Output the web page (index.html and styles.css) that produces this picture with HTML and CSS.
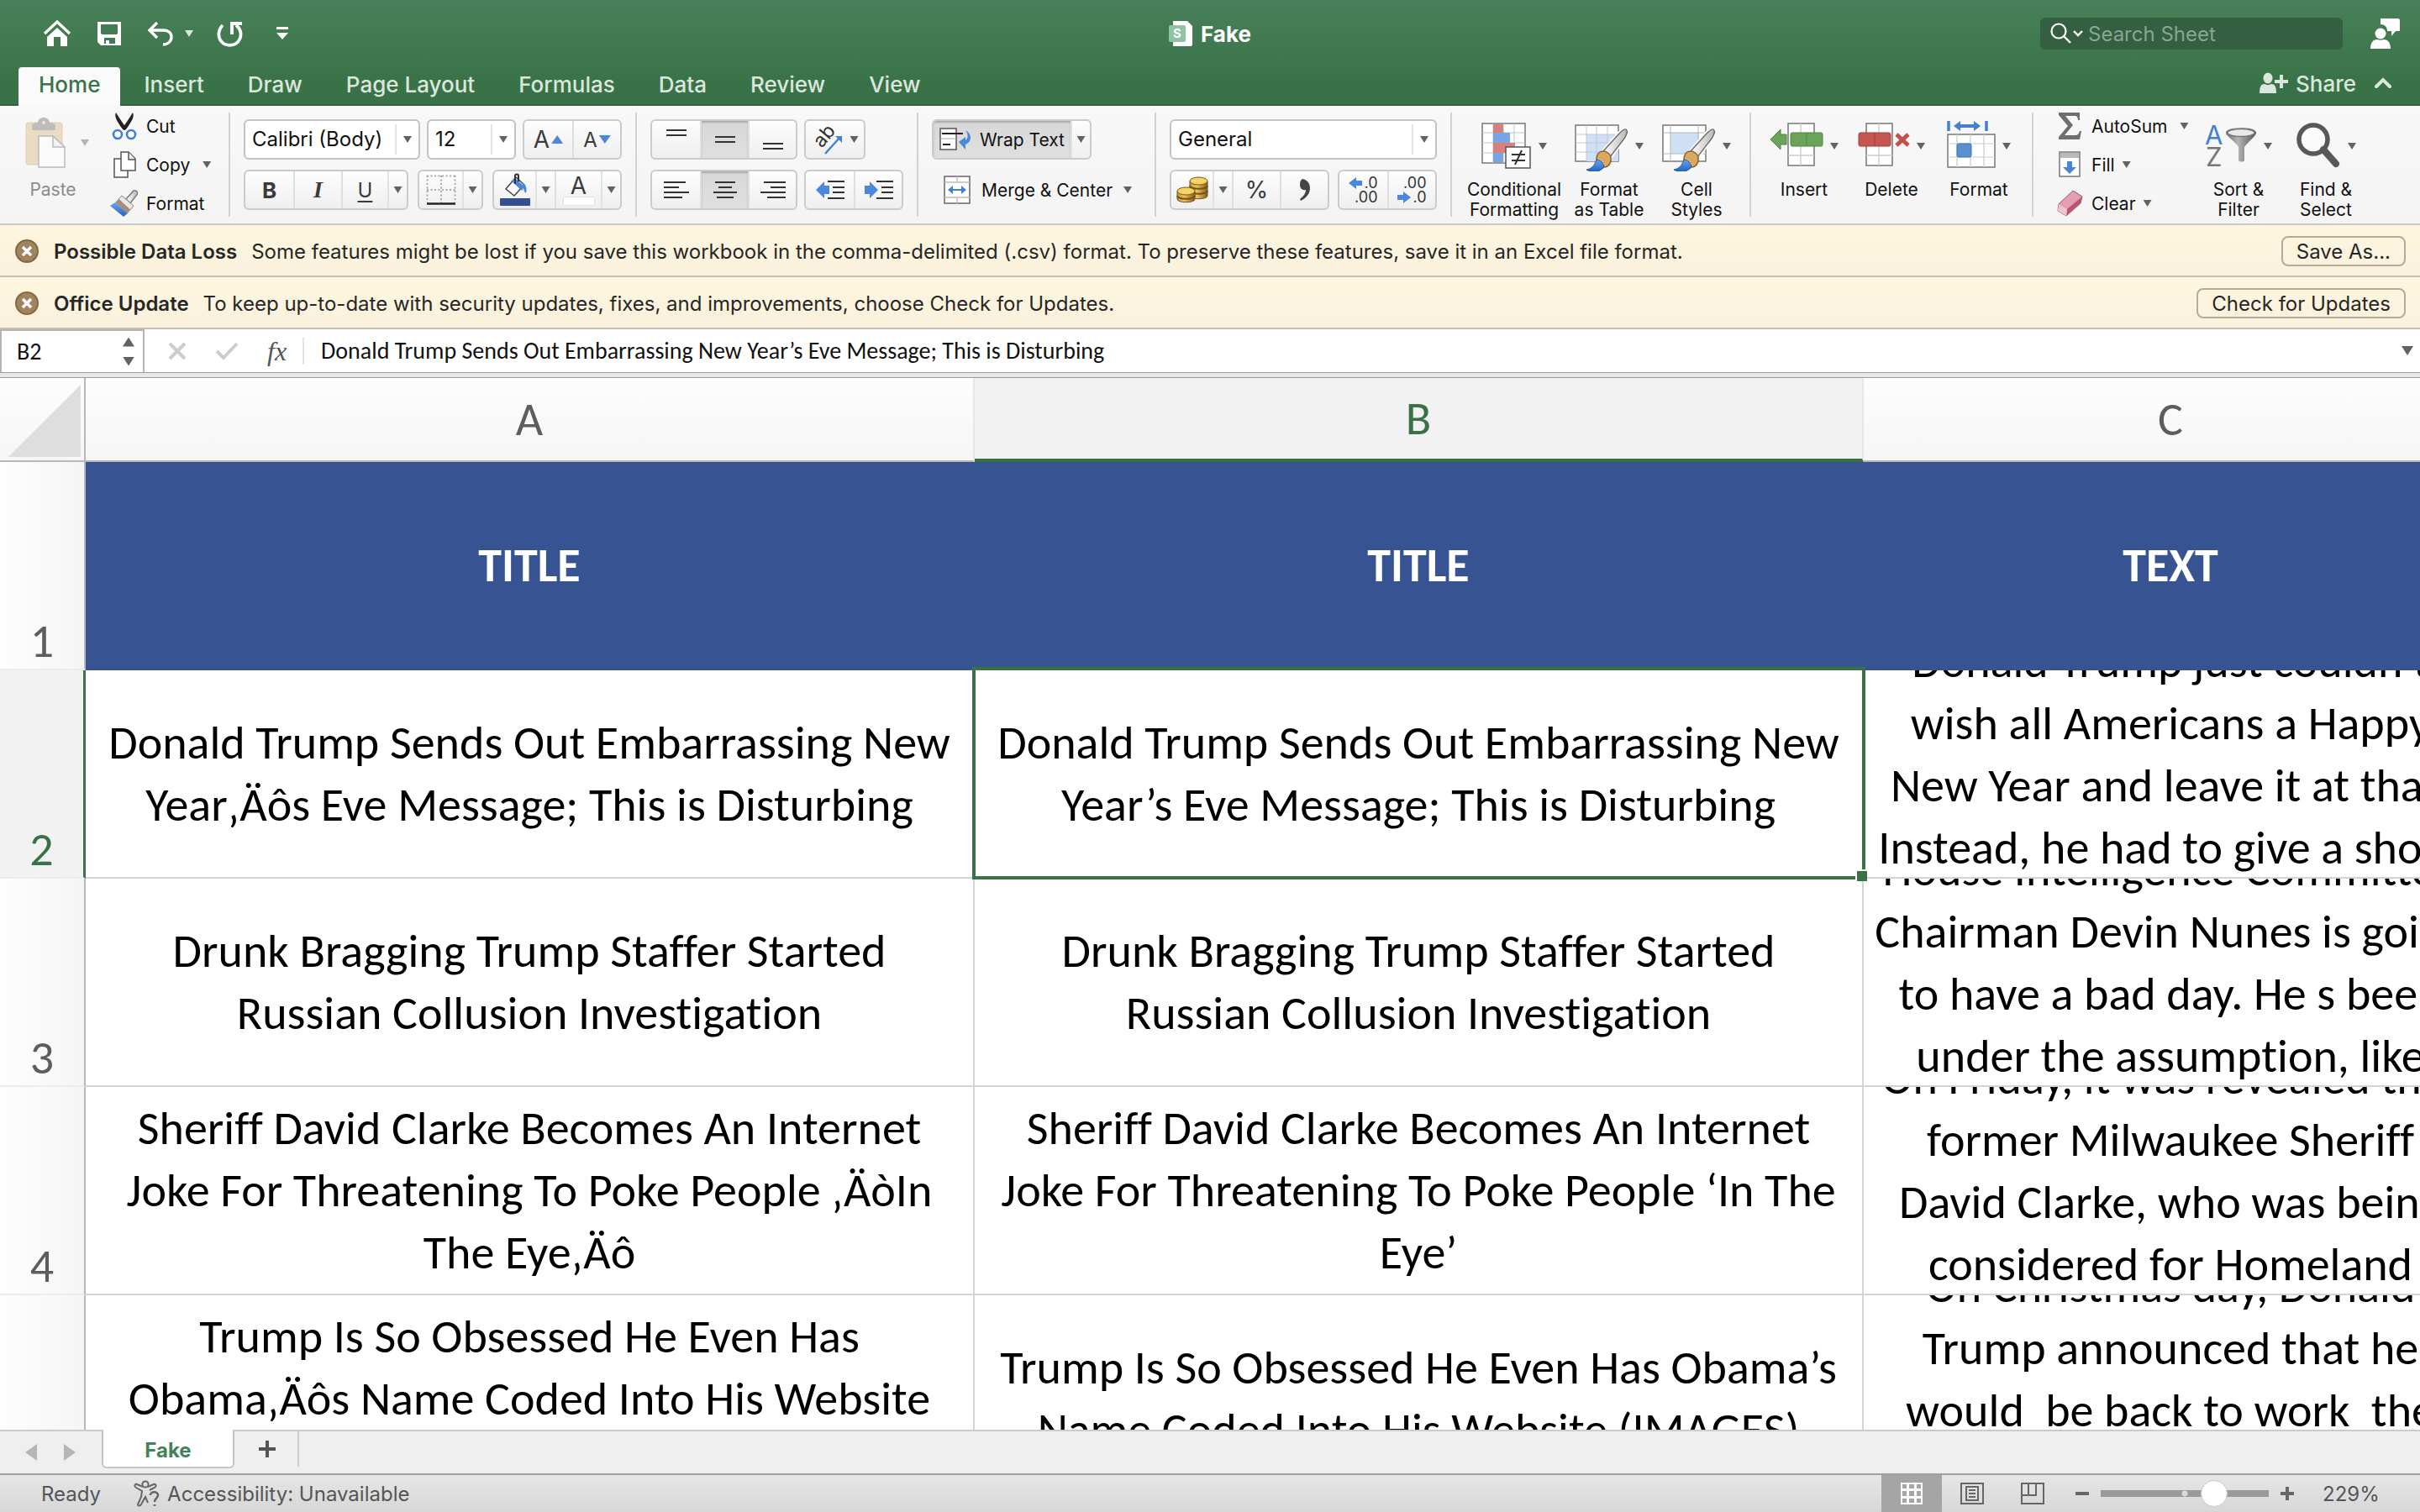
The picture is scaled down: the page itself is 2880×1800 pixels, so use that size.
FILE: index.html
```html
<!DOCTYPE html>
<html lang="en">
<head>
<meta charset="utf-8">
<title>Fake</title>
<link rel="stylesheet" href="styles.css">
</head>
<body>
<svg class="defs" aria-hidden="true">
  <defs>
    <linearGradient id="gold" x1="0" x2="1"><stop offset="0" stop-color="#c89a35"/><stop offset=".4" stop-color="#e9c45c"/><stop offset="1" stop-color="#8a5a1c"/></linearGradient>
    <linearGradient id="blade" x1="0" x2="1"><stop offset="0" stop-color="#ffffff"/><stop offset="1" stop-color="#b9b9b9"/></linearGradient>
    <linearGradient id="steel" x1="0" x2="1"><stop offset="0" stop-color="#6b6b6b"/><stop offset=".4" stop-color="#b5b5b5"/><stop offset="1" stop-color="#555"/></linearGradient>
    <linearGradient id="paint" x1="0" y1="0" x2="0" y2="1"><stop offset="0" stop-color="#6aa5ee"/><stop offset="1" stop-color="#2161c4"/></linearGradient>
    <symbol id="brush" viewBox="0 0 52 52">
      <path d="M49 1c3 2 1 6-2 11L30 34l-8-7L41 6c3-3 6-6 8-5z" fill="url(#blade)" stroke="#fff" stroke-width="5"/>
      <path d="M49 1c3 2 1 6-2 11L30 34l-8-7L41 6c3-3 6-6 8-5z" fill="url(#blade)" stroke="#6e6e6e" stroke-width="1.5"/>
      <path d="M22 27c-5 0-8 4-8 10l9 9c6 0 9-6 8-12-1-4-5-7-9-7z" fill="#d9a964" stroke="#8b642c" stroke-width="1.5"/>
      <path d="M14 37c-2 7-6 11-12 12 7 4 16 3 21-3-1-5-4-8-9-9z" fill="url(#paint)" stroke="#2158ab" stroke-width="1"/>
    </symbol>
  </defs>
</svg>

<header class="top">
  <div class="titlebar">
    <nav class="quick" aria-label="Quick access">
      <button class="plain" aria-label="Home"><svg width="34" height="32" viewBox="0 0 34 32"><path d="M2 16L17 2l15 14" fill="none" stroke="#fff" stroke-width="3.4"/><path d="M17 9L5 20v11h8V20h8v11h8V20z" fill="#fff"/></svg></button>
      <button class="plain" aria-label="Save"><svg width="28" height="28" viewBox="0 0 28 28"><path fill-rule="evenodd" fill="#fff" d="M0 0h28v28H4l-4-4zM4 3v11l2 1h17l1-1V3zM8 19v7h2v-4h4v4h7v-7z"/></svg></button>
      <button class="plain undo" aria-label="Undo"><svg width="32" height="30" viewBox="0 0 32 30"><path d="M12 2L3 11l9 9M4 11h15c6 0 10 3 10 8s-4 9-10 9" fill="none" stroke="#fff" stroke-width="3.4"/></svg><i class="caret pale"></i></button>
      <button class="plain" aria-label="Redo"><svg width="32" height="32" viewBox="0 0 32 32"><path d="M7 6C1 12 1 21 6 26s14 5 19 0c5-6 5-14-2-20M18 17V4h12" fill="none" stroke="#fff" stroke-width="3.8"/></svg></button>
      <button class="plain more" aria-label="Customize toolbar"><svg width="14" height="16" viewBox="0 0 14 16"><path d="M0 1.5h14" stroke="#fff" stroke-width="3"/><path d="M0 7h14l-7 8z" fill="#fff"/></svg></button>
    </nav>
    <h1 class="doc"><svg width="30" height="30" viewBox="0 0 30 30"><path d="M5 0h17l6 6v22c0 1-1 2-2 2H5z" fill="#fff"/><rect y="5" width="20" height="20" rx="2" fill="#8fc3a2"/><text x="10" y="20" text-anchor="middle" font-family="Inter, sans-serif" font-size="15" fill="#fff">S</text></svg>Fake</h1>
    <div class="account">
      <label class="search">
        <svg width="40" height="26" viewBox="0 0 40 26"><circle cx="11" cy="10" r="8.5" fill="none" stroke="#fff" stroke-width="2.2"/><path d="M17 16l8 8" stroke="#fff" stroke-width="2.4"/><path d="M29 10l5 5 5-5" fill="none" stroke="#fff" stroke-width="2.4"/></svg>
        <input type="search" placeholder="Search Sheet" aria-label="Search Sheet">
      </label>
      <button class="plain" aria-label="Account"><svg width="36" height="38" viewBox="0 0 36 38"><path d="M14 1h20c1 0 2 1 2 2v13h-5l-5 6v-6h-5c0-5-3-8-8-8V1z" fill="#fff"/><circle cx="13" cy="19" r="6.5" fill="#fff"/><path d="M1 37c0-8 4-11 8-11 3 1 5 1 8 0 5 0 8 4 8 11z" fill="#fff"/></svg></button>
    </div>
  </div>
  <div class="tabrow">
    <nav class="tabs">
      <a href="#" class="tab on">Home</a><a href="#" class="tab">Insert</a><a href="#" class="tab">Draw</a><a href="#" class="tab">Page Layout</a><a href="#" class="tab">Formulas</a><a href="#" class="tab">Data</a><a href="#" class="tab">Review</a><a href="#" class="tab">View</a>
    </nav>
    <div class="shareside">
      <button class="plain share"><svg width="34" height="26" viewBox="0 0 34 26"><ellipse cx="10" cy="7" rx="5.5" ry="6.5" fill="#dbe6dd"/><path d="M0 25c0-8 2-11 6-11 3 1.500 5 1.500 8 0 4 0 6 3 6 11z" fill="#dbe6dd"/><path d="M26 3v16M18 11h16" stroke="#dbe6dd" stroke-width="4"/></svg>Share</button>
      <button class="plain" aria-label="Collapse ribbon"><svg width="20" height="14" viewBox="0 0 20 14"><path d="M2 11l8-8 8 8" fill="none" stroke="#dbe6dd" stroke-width="4" stroke-linecap="round"/></svg></button>
    </div>
  </div>
</header>

<section class="ribbon" aria-label="Home ribbon">
  <div class="group clip">
    <button class="big paste" disabled>
      <span class="pic"><svg width="48" height="60" viewBox="0 0 48 60"><rect x="1" y="6" width="43" height="50" rx="3" fill="#eadcc2" stroke="#dfcfb2"/><path d="M8 15v-5c0-3 3-4 7-4 0-8 14-8 14 0 4 0 7 1 7 4v5z" fill="#bdbdbd"/><circle cx="22" cy="6" r="2" fill="#f0e6d6"/><path d="M16 22h17l14 13v24H16z" fill="#fbfbfb" stroke="#bbb" stroke-width="1.500"/><path d="M33 22v13h14z" fill="#f2f2f2" stroke="#bbb" stroke-width="1.500"/></svg><i class="caret"></i></span>
      <span class="cap">Paste</span>
    </button>
    <div class="list">
      <button class="line"><span class="ico"><svg width="30" height="34" viewBox="0 0 30 34"><path d="M5 1c-2 4 0 9 8 20l3 1 1-3C12 12 8 6 5 1z" fill="#222"/><path d="M25 1c2 4 0 9-8 20l-3 1-1-3C18 12 22 6 25 1z" fill="#222"/><circle cx="7" cy="27" r="5" fill="#fff" stroke="#4380d3" stroke-width="2.600"/><circle cx="23" cy="27" r="5" fill="#fff" stroke="#4380d3" stroke-width="2.600"/></svg></span>Cut</button>
      <button class="line"><span class="ico"><svg width="28" height="32" viewBox="0 0 28 32"><path d="M2 9h10l6 5v17H2z" fill="#fff" stroke="#555" stroke-width="1.500"/><path d="M10 1h9l8 8v14H10z" fill="#fff" stroke="#555" stroke-width="1.500"/><path d="M19 1v9h8" fill="#eee" stroke="#555" stroke-width="1.500"/></svg></span>Copy<i class="caret far"></i></button>
      <button class="line"><span class="ico"><svg width="34" height="32" viewBox="0 0 34 32"><path d="M28 1c4-1 6 3 3 6l-7 9-5-5z" fill="url(#blade)" stroke="#777" stroke-width="1.400"/><path d="M14 7l14 12-4 5L10 11z" fill="#e8e8e8" stroke="#888"/><path d="M10 11l14 13-3 4L6 15z" fill="#a98d73"/><path d="M6 15l15 13-5 4L0 19z" fill="url(#paint)"/></svg></span>Format</button>
    </div>
  </div>
  <i class="sep"></i>
  <div class="group stack">
    <div class="row spread">
      <span class="combo font"><select aria-label="Font"><option>Calibri (Body)</option></select><i class="caret"></i></span>
      <span class="combo size"><select aria-label="Font size"><option>12</option></select><i class="caret"></i></span>
      <span class="seg"><button class="w57 glyph" aria-label="Increase font size">A<i class="up"></i></button><button class="w57 glyph small" aria-label="Decrease font size">A<i class="down"></i></button></span>
    </div>
    <div class="row spread">
      <span class="seg"><button class="w57 glyph bold">B</button><button class="w57 glyph ital">I</button><button class="w55 glyph uline">U</button><button class="w23 drop" aria-label="Underline options"><i class="caret"></i></button></span>
      <span class="seg"><button class="w51" aria-label="Borders"><svg width="36" height="36" viewBox="0 0 36 36"><path d="M1 1.500h34M1 18h34M1.500 1v32M18 1v32M34.500 1v32" stroke="#aaa" stroke-width="2" stroke-dasharray="2 2.500"/><path d="M1 34.500h34" stroke="#222" stroke-width="2.600"/></svg></button><button class="w23 drop" aria-label="Border options"><i class="caret"></i></button></span>
      <span class="seg"><button class="w49" aria-label="Fill color"><svg width="38" height="40" viewBox="0 0 38 40"><path d="M8 19L20 5l10 9-12 13z" fill="#fff" stroke="#444" stroke-width="1.500"/><path d="M14 9l13 12 3-5-10-9z" fill="#4a87d8"/><path d="M28 12c5 2 5 8 4 12-3-2-3-6-4-12z" fill="#4a87d8"/><path d="M19 13V3c0-2 4-2 4 0v7" fill="none" stroke="#333" stroke-width="2"/><rect x="1" y="30" width="36" height="9" rx="1" fill="#33508f"/></svg></button><button class="w23 drop" aria-label="Fill options"><i class="caret"></i></button><button class="w55 glyph fontcol" aria-label="Font color">A</button><button class="w23 drop" aria-label="Font color options"><i class="caret"></i></button></span>
    </div>
  </div>
  <i class="sep"></i>
  <div class="group stack">
    <div class="row">
      <span class="seg"><button class="w57" aria-label="Top align"><svg width="24" height="28" viewBox="0 0 24 28"><path d="M0 3h24M0 9h24" stroke="#333" stroke-width="2"/></svg></button><button class="w57 on" aria-label="Middle align"><svg width="24" height="28" viewBox="0 0 24 28"><path d="M0 11h24M0 17h24" stroke="#333" stroke-width="2"/></svg></button><button class="w57" aria-label="Bottom align"><svg width="24" height="28" viewBox="0 0 24 28"><path d="M0 19h24M0 25h24" stroke="#333" stroke-width="2"/></svg></button></span>
      <span class="seg"><button class="w69" aria-label="Orientation"><svg width="38" height="36" viewBox="0 0 38 36"><text transform="translate(12 29) rotate(-50)" font-family="Inter, sans-serif" font-size="23" fill="#333">ab</text><path d="M16 35L34 15" stroke="#4380d3" stroke-width="2.400"/><path d="M28 14h8v8z" fill="#4380d3"/></svg><i class="caret"></i></button></span>
    </div>
    <div class="row">
      <span class="seg"><button class="w57" aria-label="Align left"><svg width="30" height="22" viewBox="0 0 30 22"><path d="M0 2h26M0 8h18M0 14h30M0 20h22" stroke="#333" stroke-width="2"/></svg></button><button class="w57 on" aria-label="Center"><svg width="30" height="22" viewBox="0 0 30 22"><path d="M3 2h24M7 8h16M1 14h28M5 20h20" stroke="#333" stroke-width="2"/></svg></button><button class="w57" aria-label="Align right"><svg width="30" height="22" viewBox="0 0 30 22"><path d="M4 2h26M12 8h18M0 14h30M8 20h22" stroke="#333" stroke-width="2"/></svg></button></span>
      <span class="seg"><button class="w57" aria-label="Decrease indent"><svg width="34" height="24" viewBox="0 0 34 24"><path d="M0 12L10 2v5h6v10h-6v5z" fill="#4b88dc"/><path d="M14 2h20M20 9h14M20 15h14M14 22h20" stroke="#333" stroke-width="2"/></svg></button><button class="w57" aria-label="Increase indent"><svg width="34" height="24" viewBox="0 0 34 24"><path d="M16 12L6 2v5H0v10h6v5z" fill="#4b88dc"/><path d="M14 2h20M20 9h14M20 15h14M14 22h20" stroke="#333" stroke-width="2"/></svg></button></span>
    </div>
  </div>
  <i class="sep"></i>
  <div class="group stack wraps">
    <div class="row">
      <span class="seg"><button class="wrapbtn on"><svg width="40" height="28" viewBox="0 0 40 28"><rect x="1" y="1" width="19" height="25" fill="#fff" stroke="#555" stroke-width="1.500"/><path d="M3 7h25" stroke="#222" stroke-width="2"/><path d="M1 13h19" stroke="#aaa"/><path d="M4 20h9" stroke="#222" stroke-width="2"/><path d="M31 3c8 4 8 14 0 17v6l-8-9 8-6v4c4-3 3-8 0-12z" fill="#4b88dc"/></svg>Wrap Text</button><button class="w23 drop" aria-label="Wrap options"><i class="caret"></i></button></span>
    </div>
    <div class="row">
      <button class="line merge"><svg width="32" height="34" viewBox="0 0 32 34"><rect x="1" y="1" width="30" height="32" fill="#fff" stroke="#666" stroke-width="1.500"/><path d="M1 8h30M1 26h30M16 1v7M16 26v7" stroke="#bbb" stroke-width="1.400"/><path d="M5 17l6-5v4h10v-4l6 5-6 5v-4H11v4z" fill="#4380d3"/></svg>Merge &amp; Center<i class="caret"></i></button>
    </div>
  </div>
  <i class="sep"></i>
  <div class="group stack">
    <div class="row">
      <span class="combo format"><select aria-label="Number format"><option>General</option></select><i class="caret"></i></span>
    </div>
    <div class="row spread">
      <span class="seg"><button class="w49" aria-label="Currency"><svg width="38" height="32" viewBox="0 0 38 32"><g stroke="#7a5118" stroke-width="1"><path d="M16 6v17c0 5 21 5 21 0V6z" fill="url(#gold)"/><path d="M16 11c0 5 21 5 21 0M16 17c0 5 21 5 21 0" fill="none" stroke-width="2"/><ellipse cx="26.500" cy="5.500" rx="10.500" ry="4.500" fill="#f6d465"/><path d="M1 18v9c0 5 21 5 21 0v-9z" fill="url(#gold)"/><path d="M1 23c0 5 21 5 21 0" fill="none" stroke-width="2"/><ellipse cx="11.500" cy="17.500" rx="10.500" ry="4.500" fill="#f6d465"/></g></svg></button><button class="w23 drop" aria-label="Currency options"><i class="caret"></i></button><button class="w57 glyph">%</button><button class="w57" aria-label="Comma style"><svg width="14" height="26" viewBox="0 0 14 26"><path d="M4 0c6 1 9 6 9 11 0 7-5 12-11 15l-1-2c4-3 7-7 7-11-4 1-7-2-7-6 0-4 1-6 3-7z" fill="#444"/></svg></button></span>
      <span class="seg"><button class="w57" aria-label="Increase decimal"><span class="dec"><span><svg width="16" height="14" viewBox="0 0 16 14"><path d="M0 7l9-7v4h7v6H9v4z" fill="#4b88dc"/></svg>.0</span><span>.00</span></span></button><button class="w57" aria-label="Decrease decimal"><span class="dec"><span>.00</span><span><svg width="16" height="14" viewBox="0 0 16 14"><path d="M16 7L7 0v4H0v6h7v4z" fill="#4b88dc"/></svg>.0</span></span></button></span>
    </div>
  </div>
  <i class="sep"></i>
  <div class="group styles">
    <button class="big broad"><span class="pic"><svg width="60" height="60" viewBox="0 0 60 60"><rect x="1" y="3" width="51" height="47" fill="#fff" stroke="#777" stroke-width="1.500"/><path d="M1 14h51M1 26h51M1 38h51M14 3v47M26 3v47M39 3v47" stroke="#c4c4c4"/><path d="M14 4h12v10H14zM14 26h26v12H14z" fill="#d9807d"/><path d="M14 14h20v12H14zM14 38h12v11H14z" fill="#77a4e4"/><rect x="29" y="31" width="29" height="25" fill="#fff" stroke="#555" stroke-width="1.500"/><path d="M36 40h16M36 47h16M48 35l-8 17" stroke="#333" stroke-width="2"/></svg><i class="caret"></i></span><span class="cap">Conditional<br>Formatting</span></button>
    <button class="big"><span class="pic"><svg width="64" height="60" viewBox="0 0 64 60"><rect x="1" y="5" width="51" height="43" fill="#fff" stroke="#777" stroke-width="1.500"/><path d="M14 16h38v32H14z" fill="#cfdff5"/><path d="M1 16h51M1 26h51M1 37h51M14 5v43M26 5v43M39 5v43" stroke="#c0c8d4"/><use href="#brush" x="12" y="9" width="52" height="52"/></svg><i class="caret"></i></span><span class="cap">Format<br>as Table</span></button>
    <button class="big"><span class="pic"><svg width="64" height="60" viewBox="0 0 64 60"><rect x="1" y="5" width="51" height="43" fill="#fff" stroke="#777" stroke-width="1.500"/><path d="M10 14h34v25H10z" fill="#cfdff5"/><path d="M1 14h51M1 39h51M10 5v43M43 5v43" stroke="#b5b5b5"/><use href="#brush" x="12" y="9" width="52" height="52"/></svg><i class="caret"></i></span><span class="cap">Cell<br>Styles</span></button>
  </div>
  <i class="sep"></i>
  <div class="group cells">
    <button class="big"><span class="pic"><svg width="64" height="60" viewBox="0 0 64 60"><path d="M22 3h31v50H22z" fill="#fff" stroke="#777" stroke-width="1.500"/><path d="M37 3v50M22 41h31" stroke="#ccc" stroke-width="1.400"/><rect x="25" y="14" width="38" height="16" rx="2" fill="#6aa45b" stroke="#4d8541"/><path d="M44 14v16" stroke="#4d8541"/><path d="M1 22l12-12v6h7v12h-7v6z" fill="#6aa45b" stroke="#4d8541"/></svg><i class="caret"></i></span><span class="cap">Insert</span></button>
    <button class="big"><span class="pic"><svg width="62" height="60" viewBox="0 0 62 60"><path d="M10 3h31v50H10z" fill="#fff" stroke="#777" stroke-width="1.500"/><path d="M25 3v50M10 41h31" stroke="#ccc" stroke-width="1.400"/><rect x="1" y="14" width="38" height="16" rx="2" fill="#c65652" stroke="#a23c39"/><path d="M20 14v16" stroke="#a23c39"/><path d="M46 16l14 13M60 16L46 29" stroke="#c0504c" stroke-width="5"/></svg><i class="caret"></i></span><span class="cap">Delete</span></button>
    <button class="big"><span class="pic"><svg width="58" height="60" viewBox="0 0 58 60"><rect x="1" y="16" width="56" height="39" fill="#fff" stroke="#777" stroke-width="1.500"/><path d="M1 27h56M1 43h56M12 16v39M28 16v39M44 16v39" stroke="#ccc" stroke-width="1.200"/><rect x="12" y="27" width="17" height="16" rx="2" fill="#5b8fd2" stroke="#3c72b8"/><path d="M2 0v12M47 0v12" stroke="#4380d3" stroke-width="3.500"/><path d="M8 6l8-6v4h16V0l8 6-8 6V8H16v4z" fill="#4380d3"/></svg><i class="caret"></i></span><span class="cap">Format</span></button>
  </div>
  <i class="sep"></i>
  <div class="group editing">
    <div class="list">
      <button class="line"><span class="ico"><svg width="28" height="32" viewBox="0 0 28 32"><path d="M1 0h25v9h-2c0-3-1-5-4-5H9l9 11L8 27h13c3 0 4-2 5-5h2l-2 10H1v-3l11-13L1 3z" fill="#6e6e6e"/></svg></span>AutoSum<i class="caret far"></i></button>
      <button class="line"><span class="ico"><svg width="26" height="32" viewBox="0 0 26 32"><rect x="1" y="1" width="24" height="29" fill="#fff" stroke="#777" stroke-width="1.500"/><path d="M2 2h22v6H2z" fill="#b9b9bd"/><path d="M10 12h6v7h5l-8 8-8-8h5z" fill="#4b84d0"/></svg></span>Fill<i class="caret"></i></button>
      <button class="line"><span class="ico"><svg width="32" height="32" viewBox="0 0 32 32"><path d="M20 1l11 7-2 8-17 15-10-6 1-8z" fill="#e39fb0" stroke="#a84f68"/><path d="M31 8L13 23l-1 8 17-15z" fill="#b65670"/><path d="M3 17l10 6-1 8-10-6z" fill="#f0c4ce"/></svg></span>Clear<i class="caret"></i></button>
    </div>
    <button class="big"><span class="pic"><svg width="62" height="60" viewBox="0 0 62 60"><g font-family="Inter, sans-serif" font-size="31"><text x="0" y="28" fill="#4380d3">A</text><text x="1" y="54" fill="#777">Z</text></g><path d="M25 14c0-8 36-8 36 0 0 4-10 11-14 17v16c-1 2-6 2-7 0V31c-3-6-15-13-15-17z" fill="url(#steel)"/><ellipse cx="43" cy="14" rx="16" ry="4.500" fill="#e9e9e9" stroke="#777" stroke-width="1.500"/></svg><i class="caret"></i></span><span class="cap">Sort &amp;<br>Filter</span></button>
    <button class="big"><span class="pic"><svg width="54" height="60" viewBox="0 0 54 60"><circle cx="21" cy="22" r="17" fill="#fbfbfb" stroke="#58585a" stroke-width="5.500"/><path d="M33 34l15 17" stroke="#58585a" stroke-width="8" stroke-linecap="round"/></svg><i class="caret"></i></span><span class="cap">Find &amp;<br>Select</span></button>
  </div>
</section>

<aside class="notice">
  <button class="plain" aria-label="Dismiss"><svg width="28" height="28" viewBox="0 0 28 28"><circle cx="14" cy="14" r="13" fill="#a08460" stroke="#84683f" stroke-width="2"/><path d="M9 9l10 10M19 9L9 19" stroke="#fff" stroke-width="3.400"/></svg></button>
  <strong>Possible Data Loss</strong><p>Some features might be lost if you save this workbook in the comma-delimited (.csv) format. To preserve these features, save it in an Excel file format.</p>
  <button class="act">Save As...</button>
</aside>
<aside class="notice">
  <button class="plain" aria-label="Dismiss"><svg width="28" height="28" viewBox="0 0 28 28"><circle cx="14" cy="14" r="13" fill="#a08460" stroke="#84683f" stroke-width="2"/><path d="M9 9l10 10M19 9L9 19" stroke="#fff" stroke-width="3.400"/></svg></button>
  <strong>Office Update</strong><p>To keep up-to-date with security updates, fixes, and improvements, choose Check for Updates.</p>
  <button class="act">Check for Updates</button>
</aside>

<div class="formula">
  <div class="namebox"><input value="B2" aria-label="Name box"><span class="spin"><i class="up"></i><i class="down"></i></span></div>
  <div class="fxtools">
    <button class="plain" aria-label="Cancel"><svg width="22" height="22" viewBox="0 0 22 22"><path d="M2 2l18 18M20 2L2 20" stroke="#ccc" stroke-width="4"/></svg></button>
    <button class="plain" aria-label="Enter"><svg width="28" height="22" viewBox="0 0 28 22"><path d="M2 11l8 8L26 2" fill="none" stroke="#ccc" stroke-width="4"/></svg></button>
    <button class="plain fx">fx</button>
  </div>
  <input class="content" aria-label="Formula" value="Donald Trump Sends Out Embarrassing New Year’s Eve Message; This is Disturbing">
  <button class="plain" aria-label="Expand formula bar"><i class="caret wide"></i></button>
</div>

<main class="sheet">
  <table>
    <colgroup><col class="c0"><col class="c1"><col class="c1"><col class="c2"></colgroup>
    <thead><tr><th class="corner"><svg width="86" height="86" viewBox="0 0 86 86"><path d="M86 0v86H0z" fill="#dedede"/></svg></th><th>A</th><th class="sel">B</th><th>C</th></tr></thead>
    <tbody>
      <tr class="head"><th>1</th><td>TITLE</td><td>TITLE</td><td>TEXT</td></tr>
      <tr class="cur"><th>2</th><td><div>Donald Trump Sends Out Embarrassing New<br>Year‚Äôs Eve Message; This is Disturbing</div></td><td class="active"><div>Donald Trump Sends Out Embarrassing New<br>Year’s Eve Message; This is Disturbing</div><span class="frame"></span></td><td><div class="low">Donald Trump just couldn t<br>wish all Americans a Happy<br>New Year and leave it at that.<br>Instead, he had to give a shout</div></td></tr>
      <tr><th>3</th><td><div>Drunk Bragging Trump Staffer Started<br>Russian Collusion Investigation</div></td><td><div>Drunk Bragging Trump Staffer Started<br>Russian Collusion Investigation</div></td><td><div class="low">House Intelligence Committee<br>Chairman Devin Nunes is going<br>to have a bad day. He s been<br>under the assumption, like</div></td></tr>
      <tr><th>4</th><td><div>Sheriff David Clarke Becomes An Internet<br>Joke For Threatening To Poke People ‚ÄòIn<br>The Eye‚Äô</div></td><td><div>Sheriff David Clarke Becomes An Internet<br>Joke For Threatening To Poke People ‘In The<br>Eye’</div></td><td><div class="low">On Friday, it was revealed that<br>former Milwaukee Sheriff<br>David Clarke, who was being<br>considered for Homeland</div></td></tr>
      <tr><th>5</th><td><div>Trump Is So Obsessed He Even Has<br>Obama‚Äôs Name Coded Into His Website<br>(IMAGES)</div></td><td><div>Trump Is So Obsessed He Even Has Obama’s<br>Name Coded Into His Website (IMAGES)</div></td><td><div class="low">On Christmas day, Donald<br>Trump announced that he<br>would&nbsp; be back to work&nbsp; the<br>following day</div></td></tr>
    </tbody>
  </table>
</main>

<nav class="sheets" aria-label="Sheets">
  <button class="plain" aria-label="Previous sheet"><svg width="14" height="20" viewBox="0 0 14 20"><path d="M14 0v20L0 10z" fill="#b5b5b5"/></svg></button>
  <button class="plain next" aria-label="Next sheet"><svg width="14" height="20" viewBox="0 0 14 20"><path d="M0 0v20l14-10z" fill="#b5b5b5"/></svg></button>
  <a href="#" class="sheettab">Fake</a>
  <button class="plain add" aria-label="Add sheet"><svg width="20" height="20" viewBox="0 0 20 20"><path d="M10 0v20M0 10h20" stroke="#555" stroke-width="4"/></svg></button>
</nav>

<footer class="status">
  <span>Ready</span>
  <span class="acc"><svg width="32" height="32" viewBox="0 0 32 32" fill="none" stroke="#666" stroke-width="2"><circle cx="14" cy="5" r="3.600"/><path d="M11 8L4 5C2 4 0 7 3 9l7 4-1 7-4 9c0 2 3 2 4 0l5-9 3 7M17 8l7-3c2-1 4 2 1 4l-6 3"/><path d="M20 18c0-5 9-5 9 0 0 4-4 3-4 8M25 29v2" stroke-width="2.600"/></svg>Accessibility: Unavailable</span>
  <div class="views">
    <button class="view on" aria-label="Normal view"><svg width="28" height="28" viewBox="0 0 28 28"><path fill-rule="evenodd" fill="#fff" d="M1 1h26v26H1zM3 3v5h5V3zM11 3v5h6V3zM20 3v5h5V3zM3 11v6h5v-6zM11 11v6h6v-6zM20 11v6h5v-6zM3 20v5h5v-5zM11 20v5h6v-5zM20 20v5h5v-5z"/></svg></button>
    <button class="view" aria-label="Page layout view"><svg width="28" height="26" viewBox="0 0 28 26" fill="none" stroke="#666" stroke-width="2"><rect x="1" y="1" width="26" height="24"/><rect x="7" y="5" width="14" height="16"/><path d="M10 9h8M10 13h8M10 17h8"/></svg></button>
    <button class="view" aria-label="Page break view"><svg width="28" height="26" viewBox="0 0 28 26" fill="none" stroke="#666" stroke-width="2"><rect x="1" y="1" width="26" height="24"/><path d="M1 15h17V1M9 1v14"/></svg></button>
    <button class="plain out" aria-label="Zoom out"><svg width="16" height="16" viewBox="0 0 16 16"><path d="M0 8h16" stroke="#666" stroke-width="4"/></svg></button>
    <input type="range" aria-label="Zoom" min="0" max="100" value="71">
    <button class="plain" aria-label="Zoom in"><svg width="16" height="16" viewBox="0 0 16 16"><path d="M0 8h16M8 0v16" stroke="#666" stroke-width="4"/></svg></button>
    <span class="pctval">229%</span>
  </div>
</footer>
</body>
</html>
```
FILE: styles.css
```css
* { box-sizing: border-box; }
body {
  margin: 0;
  height: 100vh;
  display: flex;
  flex-direction: column;
  overflow: hidden;
  background: #fff;
  font-family: Inter, "Liberation Sans", sans-serif;
  font-size: 24px;
  color: #111;
}
button, input, select { font: inherit; color: inherit; margin: 0; }
button { padding: 0; border: 0; background: none; display: flex; align-items: center; justify-content: center; }
a { color: inherit; text-decoration: none; }
svg { display: block; flex: none; }
.defs { position: absolute; width: 0; height: 0; }
.caret { flex: none; width: 10px; height: 8px; background: #626262; clip-path: polygon(0 0, 100% 0, 50% 100%); }
.caret.pale { background: #dbe6dd; }
.caret.wide { width: 14px; height: 11px; }

/* Title bar and tabs */
.top { flex: none; background: linear-gradient(#488059, #3a7248 80%); border-bottom: 2px solid #315f3f; }
.titlebar { height: 80px; display: grid; grid-template-columns: 1fr auto 1fr; align-items: center; }
.quick { display: flex; align-items: center; padding-left: 51px; gap: 31px; }
.undo { gap: 13px; margin-right: -3px; }
.more { margin-left: 8px; }
.doc { margin: 0; display: flex; align-items: center; gap: 8px; font-size: 26px; font-weight: 700; color: #fff; }
.account { display: flex; justify-content: flex-end; align-items: center; gap: 32px; padding-right: 24px; }
.search { width: 360px; height: 38px; border-radius: 6px; background: #345f40; display: flex; align-items: center; gap: 6px; padding-left: 11px; }
.search input { width: 280px; border: 0; background: none; outline: 0; font-size: 24px; padding: 0; color: #fff; }
.search input::placeholder { color: #88a68f; opacity: 1; }
.tabrow { display: flex; justify-content: space-between; height: 44px; padding-left: 22px; }
.tabs { display: flex; gap: 4px; }
.tab { padding: 0 24px; height: 46px; line-height: 42px; font-size: 26px; font-weight: 500; color: #dbe6dd; border-radius: 4px 4px 0 0; }
.tab.on { background: #fafafa; color: #3a7248; }
.shareside { display: flex; align-items: center; gap: 22px; padding: 0 34px 6px 0; }
.share { gap: 9px; font-size: 26px; font-weight: 500; color: #dbe6dd; }

/* Ribbon */
.ribbon { flex: none; height: 142px; display: flex; align-items: center; background: linear-gradient(#f8f8f8, #f4f4f4); border-bottom: 2px solid #c9c9c9; font-size: 21px; }
.sep { flex: none; width: 2px; height: 124px; background: #d2d2d2; }
.group { flex: none; height: 140px; display: flex; }
.stack { flex-direction: column; justify-content: center; gap: 12px; padding: 0 16px; }
.row { display: flex; height: 48px; gap: 8px; align-items: center; }
.spread { justify-content: space-between; }
.clip { width: 272px; padding-left: 14px; }
.list { display: flex; flex-direction: column; justify-content: center; }
.line { height: 46px; justify-content: flex-start; gap: 9px; }
.line .ico { width: 34px; display: flex; justify-content: center; }
.far { margin-left: 6px; }
.big { width: 104px; flex-direction: column; justify-content: flex-start; padding-top: 18px; }
.big.broad { width: 122px; }
.pic { display: flex; align-items: center; gap: 8px; height: 60px; }
.cap { margin-top: 10px; line-height: 24px; text-align: center; }
.paste { color: #8c8c8c; padding-top: 14px; width: 108px; }
.paste .pic { gap: 18px; height: 60px; }
.paste .cap { margin: 14px 10px 0 0; }
.paste .caret { background: #b5b5b5; }
.clip .list { margin-left: 9px; }
.combo { display: flex; align-items: center; height: 48px; border: 2px solid #c3c3c3; border-radius: 6px; background: #fff; padding-right: 8px; }
.combo select { flex: 1; min-width: 0; height: 36px; appearance: none; border: 0; border-right: 2px solid #e4e4e4; background: none; padding: 0 0 0 8px; margin-right: 8px; font-size: 24px; line-height: 36px; outline: 0; }
.font { width: 210px; }
.size { width: 106px; }
.format { width: 318px; }
.seg { display: flex; height: 48px; border: 2px solid #cbcbcb; border-radius: 6px; background: linear-gradient(#fdfdfd, #efefef); overflow: hidden; }
.seg button + button { border-left: 2px solid #dedede; }
.seg .drop { border-left-color: #e2e2e2; }
.seg .on { background: linear-gradient(#d8d8d8, #dfdfdf); box-shadow: inset 0 2px 2px #aaa; }
.w23 { width: 23px; }
.w49 { width: 49px; }
.w51 { width: 51px; }
.w55 { width: 55px; }
.w57 { width: 57px; }
.w69 { width: 69px; gap: 8px; }
.glyph { font-size: 28px; color: #3a3a3a; gap: 2px; }
.glyph.small { font-size: 24px; }
.up, .down { width: 14px; height: 10px; background: #4b88dc; clip-path: polygon(50% 0, 100% 100%, 0 100%); }
.down { clip-path: polygon(0 0, 100% 0, 50% 100%); }
.bold { font-weight: 700; font-size: 26px; }
.ital { font-family: "Liberation Serif", serif; font-style: italic; font-weight: 700; }
.uline { text-decoration: underline; text-underline-offset: 4px; font-size: 24px; }
.fontcol { flex-direction: column; gap: 0; line-height: 26px; }
.fontcol::after { content: ""; width: 36px; height: 9px; background: #fff; border: 1px solid #e2e2e2; border-radius: 2px; }
.dec { display: flex; flex-direction: column; align-items: flex-end; font-size: 18px; line-height: 17px; color: #333; }
.dec > span { display: flex; align-items: center; gap: 2px; }
.wraps { width: 281px; }
.wrapbtn { width: 163px; gap: 8px; }
.merge { padding-left: 14px; gap: 13px; }
.styles { padding: 0 11px 0 13px; }
.cells { padding: 0 11px; }
.editing { padding-left: 26px; }
.editing .list { width: 166px; }

/* Notices */
.notice { flex: none; height: 62px; display: flex; align-items: center; padding: 2px 17px 0 18px; background: linear-gradient(#fef6de, #f9f1dd); border-bottom: 2px solid #c6bfac; color: #262626; }
.notice strong { margin: 0 17px 0 18px; font-weight: 600; }
.notice p { margin: 0; flex: 1; white-space: nowrap; }
.act { height: 36px; padding: 0 16px; border: 2px solid #b3ac9b; border-radius: 8px; }

/* Formula bar */
.formula { flex: none; height: 58px; display: flex; align-items: center; padding: 0 8px 7px 0; background: linear-gradient(#9e9e9e, #9e9e9e) 0 51px / 100% 1px no-repeat, linear-gradient(#9e9e9e, #9e9e9e) 0 57px / 100% 1px no-repeat, linear-gradient(#fff 52px, #e6e6e6 52px); }
.namebox { width: 172px; height: 51px; display: flex; align-items: center; justify-content: space-between; border: 2px solid #b4b4b4; border-bottom: 0; padding: 0 10px 0 18px; }
.namebox input { width: 90px; border: 0; padding: 0; outline: 0; font-family: Carlito, Lato, sans-serif; font-size: 28px; background: none; }
.spin { display: flex; flex-direction: column; gap: 12px; }
.spin i { background: #626262; height: 11px; }
.fxtools { display: flex; align-items: center; gap: 34px; padding: 0 19px 0 28px; height: 32px; border-right: 2px solid #e2e2e2; }
.fx { font-family: "Liberation Serif", serif; font-style: italic; font-size: 32px; line-height: 32px; color: #555; }
.content { flex: 1; border: 0; outline: 0; padding: 0 0 0 20px; font-family: Carlito, Lato, sans-serif; font-size: 28px; font-variant-ligatures: none; background: none; }

/* Grid */
.sheet { flex: 1; min-height: 0; overflow: hidden; font-family: Carlito, Lato, "Liberation Sans", sans-serif; font-size: 56px; font-variant-ligatures: none; }
table { table-layout: fixed; border-collapse: separate; border-spacing: 0; width: 2950px; }
.c0 { width: 102px; }
.c1 { width: 1058px; }
.c2 { width: 732px; }
th, td { padding: 0; }
thead th { height: 100px; font-weight: 400; color: #5d5d5d; background: linear-gradient(#fdfdfd, #f6f6f6); border-bottom: 2px solid #b8b8b8; border-right: 2px solid #e6e6e6; }
.corner { border-right: 2px solid #b8b8b8; vertical-align: bottom; }
.corner svg { margin: 0 0 4px 10px; }
thead .sel { background: #f2f2f2; color: #3a7248; border-bottom: 4px solid #3a7248; }
tbody tr { height: 248px; }
tbody th { vertical-align: bottom; font-weight: 400; line-height: 58px; padding-bottom: 4px; color: #5d5d5d; background: linear-gradient(90deg, #fefefe, #f5f5f5); border-right: 2px solid #b8b8b8; border-bottom: 2px solid #ececec; }
.cur th { background: #f2f2f2; color: #3a7248; border-right: 3px solid #3a7248; }
td { position: relative; text-align: center; vertical-align: middle; border-right: 2px solid #d4d4d4; border-bottom: 2px solid #d4d4d4; }
td div { height: 246px; overflow: hidden; display: flex; flex-direction: column; justify-content: center; line-height: 74px; white-space: nowrap; color: #000; }
td .low { height: 248px; margin-bottom: -2px; justify-content: flex-end; }
.head td { background: #375392; border-color: #375392; color: #fff; font-weight: 700; }
.frame { position: absolute; inset: -4px -4px -3px -3px; border: 4px solid #3a7248; pointer-events: none; z-index: 1; }
.frame::after { content: ""; position: absolute; right: -6px; bottom: -6px; width: 12px; height: 12px; background: #3a7248; border: 2px solid #fff; border-width: 2px 0 0 2px; }

/* Sheet tabs */
.sheets { flex: none; height: 54px; display: flex; align-items: center; background: #efefef; border-top: 2px solid #cbcbcb; border-bottom: 2px solid #a0a0a0; padding-left: 30px; }
.next { margin: 0 31px 0 32px; }
.sheettab { align-self: flex-start; width: 158px; height: 46px; margin-top: -2px; line-height: 50px; text-align: center; background: #fff; border: 2px solid #c4c4c4; border-top: 0; border-radius: 0 0 6px 6px; color: #43835a; font-weight: 700; }
.add { height: 42px; padding: 0 26px 0 29px; border-right: 2px solid #cfcfcf; align-self: flex-start; }

/* Status bar */
.status { flex: none; height: 44px; display: flex; align-items: center; padding-left: 49px; background: linear-gradient(#e6e6e6, #d7d7d7); color: #555; }
.acc { display: flex; align-items: center; gap: 8px; margin-left: 39px; }
.views { display: flex; align-items: center; margin-left: auto; height: 44px; }
.view { width: 72px; height: 44px; }
.view.on { background: #a5a5a5; }
.out { margin: 0 14px 0 15px; }
.status input { appearance: none; width: 200px; height: 32px; margin: 0 14px 0 0; background: radial-gradient(circle at 100px 50%, #dcdcdc 3px, transparent 4px), linear-gradient(#9a9a9a, #9a9a9a) 0 50% / 100% 8px no-repeat; }
.status input::-webkit-slider-thumb { appearance: none; width: 32px; height: 32px; border-radius: 50%; background: #fff; border: 1px solid #c8c8c8; }
.pctval { width: 150px; padding-left: 34px; }
```
